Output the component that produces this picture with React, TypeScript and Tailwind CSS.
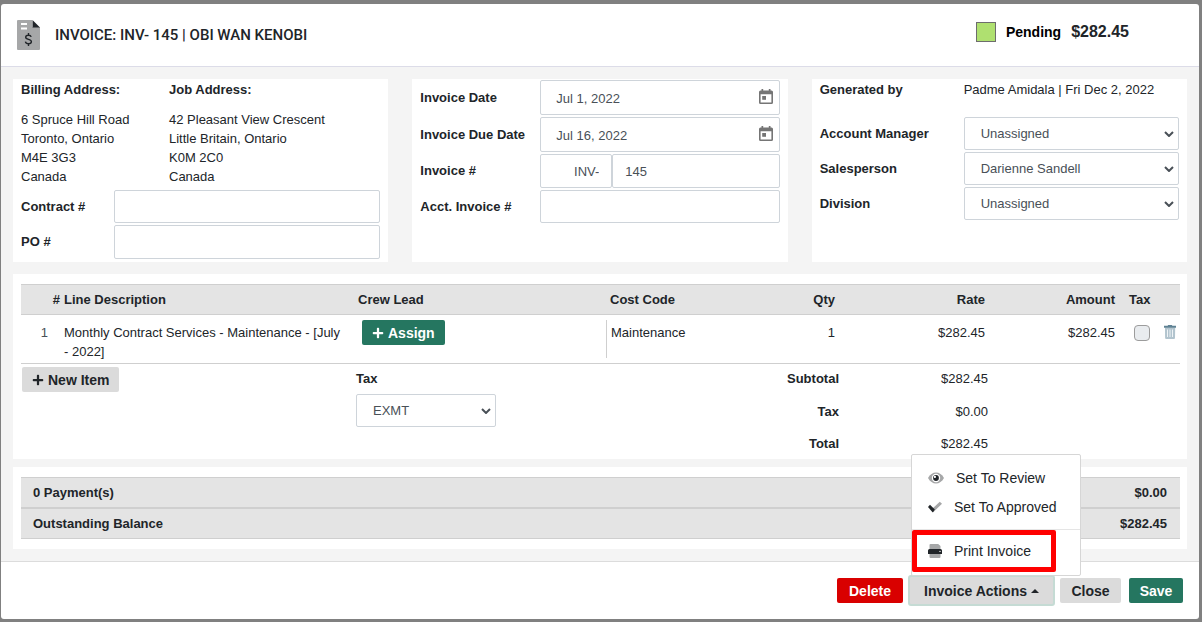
import { type ReactNode } from "react";
import { FaPlus } from "react-icons/fa";

const label = "text-[13px] leading-5 font-bold text-[#212529]";
const field = "w-full rounded-[2px] border border-[#ced4da] bg-white text-[13px] text-[#495057]";

function Chevron() {
  return (
    <svg viewBox="0 0 10 6" className="pointer-events-none absolute right-[5px] top-1/2 h-[6px] w-[10px] -translate-y-1/2" fill="none" stroke="#495057" strokeWidth="2">
      <path d="M1 1l4 4 4-4" />
    </svg>
  );
}

function Select({ id, value }: { id: string; value: string }) {
  return (
    <div className="relative w-full">
      <select id={id} defaultValue={value} className={`${field} h-[33px] appearance-none pl-4 pr-5`}>
        <option>{value}</option>
      </select>
      <Chevron />
    </div>
  );
}

function DateField({ id, value }: { id: string; value: string }) {
  return (
    <div className="relative">
      <input id={id} defaultValue={value} className={`${field} h-[35px] pl-[15px] pr-8 pt-0.5 text-[#212529]`} />
      <button type="button" aria-label="Open calendar" className="absolute right-[7px] top-[9px]">
        <svg viewBox="0 0 14 15" className="h-[15px] w-[14px]">
          <path d="M1.500 1.500H2.500V0h1.700v1.500h5.600V0h1.700v1.500h1A1.500 1.500 0 0 1 14 3v10.500a1.500 1.500 0 0 1-1.500 1.500h-11A1.500 1.500 0 0 1 0 13.500V3a1.500 1.500 0 0 1 1.500-1.500zM1.600 5.200v8.200h10.800V5.200z" fill="#757575" fillRule="evenodd" />
          <path d="M3.200 7h3.800v3.800H3.200z" fill="#757575" />
        </svg>
      </button>
    </div>
  );
}

function Panel({ children }: { children: ReactNode }) {
  return <section className="min-h-[183px] bg-white px-2">{children}</section>;
}

function Address({ title, lines }: { title: string; lines: string[] }) {
  return (
    <div>
      <h2 className={label}>{title}</h2>
      <address className="mt-2.5 text-[13px] leading-[19px] not-italic">
        {lines.map((l) => (
          <div key={l}>{l}</div>
        ))}
      </address>
    </div>
  );
}

export default function App() {
  return (
    <div className="bg-[#808080] pt-1 pr-[3px] pb-[3px] pl-px font-['Liberation_Sans',Arial,sans-serif] text-[13px] text-[#212529]">
      <main className="rounded-[3px] bg-white">
        <header className="flex h-[63px] items-center border-b border-[#dcdce8] pr-[70px] pl-4">
          <svg viewBox="0 0 23 30" className="h-[30px] w-[23px]">
            <path d="M1 0h14v7h8v22a1 1 0 0 1-1 1H1a1 1 0 0 1-1-1V1a1 1 0 0 1 1-1z" fill="#a6a7a8" />
            <path d="M15.500 0L23 7.500h-7.500z" fill="#212529" />
            <path d="M4 4h6M4 8.500h6" stroke="#fff" strokeWidth="1.800" />
            <path d="M14.200 16.900c-.3-1.100-1.300-1.700-2.800-1.700-1.700 0-2.700.8-2.700 2 0 2.900 5.700 1.400 5.700 4.400 0 1.400-1.200 2.200-2.900 2.200s-2.800-.8-3.100-2.100M11.500 13v2.200M11.500 23.800v2.200" fill="none" stroke="#212529" strokeWidth="1.400" />
          </svg>
          <h1 className="ml-[15px] font-['Roboto',sans-serif] text-[15px] font-medium">INVOICE: INV- 145 | OBI WAN KENOBI</h1>
          <div className="mb-[7px] ml-auto flex items-center gap-2.5">
            <span className="size-5 border border-[#6d6d6d] bg-[#afe070]" />
            <strong className="text-sm text-black">Pending</strong>
            <strong className="text-base">$282.45</strong>
          </div>
        </header>

        <div className="bg-[#f4f4f4] p-3">
          <div className="grid grid-cols-3 gap-6">
            <Panel>
              <div className="grid grid-cols-[148px_1fr] pt-px">
                <Address title="Billing Address:" lines={["6 Spruce Hill Road", "Toronto, Ontario", "M4E 3G3", "Canada"]} />
                <Address title="Job Address:" lines={["42 Pleasant View Crescent", "Little Britain, Ontario", "K0M 2C0", "Canada"]} />
              </div>
              <div className="mt-1 grid grid-cols-[93px_1fr] items-center gap-y-0.5">
                <label htmlFor="contract" className={label}>Contract #</label>
                <input id="contract" className={`${field} h-[33px] px-3`} />
                <label htmlFor="po" className={label}>PO #</label>
                <input id="po" className={`${field} h-[34px] px-3`} />
              </div>
            </Panel>
            <Panel>
              <div className="grid grid-cols-[120px_1fr] items-center gap-y-0.5 pt-px">
                <label htmlFor="date" className={label}>Invoice Date</label>
                <DateField id="date" value="Jul 1, 2022" />
                <label htmlFor="due" className={label}>Invoice Due Date</label>
                <DateField id="due" value="Jul 16, 2022" />
                <label htmlFor="number" className={label}>Invoice #</label>
                <div className="flex">
                  <input aria-label="Invoice prefix" defaultValue="INV-" className={`${field} h-[34px] max-w-[72px] px-3 text-right`} />
                  <input id="number" defaultValue="145" className={`${field} h-[34px] min-w-0 px-3`} />
                </div>
                <label htmlFor="acct" className={label}>Acct. Invoice #</label>
                <input id="acct" className={`${field} h-[33px] px-3`} />
              </div>
            </Panel>
            <Panel>
              <div className="grid grid-cols-[144px_1fr] items-center pt-px">
                <span className={label}>Generated by</span>
                <span className="whitespace-nowrap leading-5">Padme Amidala | Fri Dec 2, 2022</span>
              </div>
              <div className="mt-[17px] grid grid-cols-[144px_1fr] items-center gap-y-0.5">
                <label htmlFor="manager" className={label}>Account Manager</label>
                <Select id="manager" value="Unassigned" />
                <label htmlFor="sales" className={label}>Salesperson</label>
                <Select id="sales" value="Darienne Sandell" />
                <label htmlFor="division" className={label}>Division</label>
                <Select id="division" value="Unassigned" />
              </div>
            </Panel>
          </div>

          <section className="mt-3 bg-white pt-2.5 pr-[7px] pb-[5px] pl-2">
            <table className="w-full table-fixed border-collapse leading-[19px]">
              <colgroup>
                <col className="w-[43px]" />
                <col />
                <col className="w-[248px]" />
                <col className="w-[141px]" />
                <col className="w-[88px]" />
                <col className="w-[150px]" />
                <col className="w-[130px]" />
                <col className="w-[41px]" />
                <col className="w-[24px]" />
              </colgroup>
              <thead className="border-y border-[#cfcfcf] bg-[#e4e4e4]">
                <tr className="h-[30px] text-left">
                  <th className="pr-1 text-right">#</th>
                  <th>Line Description</th>
                  <th>Crew Lead</th>
                  <th className="pl-1">Cost Code</th>
                  <th className="text-right">Qty</th>
                  <th className="text-right">Rate</th>
                  <th className="text-right">Amount</th>
                  <th className="pl-3.5">Tax</th>
                  <th aria-label="Remove" />
                </tr>
              </thead>
              <tbody>
                <tr className="border-b border-[#cfcfcf] align-top">
                  <td className="pt-2 pr-4 text-right text-[#495057]">1</td>
                  <td className="pt-2 pr-3">Monthly Contract Services - Maintenance - [July - 2022]</td>
                  <td className="pt-[5px] pl-1">
                    <button type="button" className="flex h-[25px] items-center gap-1 rounded-[2px] bg-[#257660] px-2.5 text-sm font-bold text-white">
                      <FaPlus className="size-3" />Assign
                    </button>
                  </td>
                  <td className="pt-[5px] pb-[5px]">
                    <div className="h-[38px] border-l border-[#cfcfcf] pt-[3px] pl-1">Maintenance</div>
                  </td>
                  <td className="pt-2 text-right">1</td>
                  <td className="pt-2 text-right">$282.45</td>
                  <td className="pt-2 text-right">$282.45</td>
                  <td className="pt-2.5 pl-[19px]">
                    <input type="checkbox" aria-label="Taxable" className="block size-4 appearance-none rounded-[4px] border border-[#9c9c9c] bg-[#e9ecef]" />
                  </td>
                  <td className="pt-2.5 pl-2">
                    <button type="button" aria-label="Delete line" className="block">
                      <svg viewBox="0 0 12 14" className="h-[14px] w-3">
                        <path d="M1 2.500h10.200l-.2 10.400a1.100 1.100 0 0 1-1.100 1.100H2.200a1.100 1.100 0 0 1-1.100-1.100z" fill="#b2c4ce" />
                        <path d="M3.500 4.500v7.500M6 4.500v7.500M8.500 4.500v7.500" stroke="#eef3f6" strokeWidth="1" />
                        <path d="M0 .800h3.600L4.200 0h3.600l.6.800H12v1.900H0z" fill="#5f8294" />
                      </svg>
                    </button>
                  </td>
                </tr>
              </tbody>
            </table>
            <div className="flex h-[90px]">
              <div className="w-[335px] pt-[3px] pl-px">
                <button type="button" className="flex h-[25px] items-center gap-1 rounded-[2px] bg-[#dbdbdb] px-2.5 text-sm font-bold">
                  <FaPlus className="size-3" />New Item
                </button>
              </div>
              <div className="w-[140px] pt-[5px]">
                <label htmlFor="tax" className={`${label} mb-[5px] block`}>Tax</label>
                <Select id="tax" value="EXMT" />
              </div>
              <dl className="mr-48 ml-auto grid grid-cols-[1fr_149px] gap-y-[13px] pt-[5px] text-right leading-[19px]">
                <dt className="font-bold">Subtotal</dt>
                <dd>$282.45</dd>
                <dt className="font-bold">Tax</dt>
                <dd>$0.00</dd>
                <dt className="font-bold">Total</dt>
                <dd>$282.45</dd>
              </dl>
            </div>
          </section>

          <section className="mt-2 bg-white py-2.5 pr-[7px] pl-2 font-bold">
            <div className="flex h-[31px] items-center justify-between border-y border-[#cfcfcf] bg-[#e4e4e4] pr-[13px] pl-3">
              <span>0 Payment(s)</span>
              <span>$0.00</span>
            </div>
            <div className="flex h-[31px] items-center justify-between border-y border-[#cfcfcf] bg-[#e4e4e4] pr-[13px] pl-3">
              <span>Outstanding Balance</span>
              <span>$282.45</span>
            </div>
          </section>
        </div>

        <footer className="flex h-[58px] items-center justify-end gap-[5px] border-t border-[#dcdcdc] pr-4">
          <button type="button" className="h-[25px] w-[66px] rounded-[2px] bg-[#d90000] text-sm font-bold text-white">Delete</button>
          <div className="relative">
            <button type="button" aria-expanded="true" className="flex h-[31px] w-[147px] items-center justify-center gap-1 rounded-[3px] border-2 border-[#c5dbd4] bg-[#dbdbdb] text-sm font-bold">
              Invoice Actions
              <svg viewBox="0 0 8 4" className="h-1 w-2"><path d="M0 4l4-4 4 4z" fill="#212529" /></svg>
            </button>
            <div role="menu" className="absolute bottom-[30px] left-[3px] w-[170px] rounded-[2px] border border-[#d6d6d6] bg-white pt-2 pb-[3px] text-sm">
              <button type="button" role="menuitem" className="flex h-[29px] w-full items-center gap-3 pl-4">
                <svg viewBox="0 0 16 12" className="h-3 w-4">
                  <path d="M0 6C2 2.400 4.800.5 8 .5S14 2.400 16 6c-2 3.600-4.800 5.500-8 5.500S2 9.600 0 6z" fill="#a6a7a8" />
                  <circle cx="8" cy="6" r="4.200" fill="#fff" />
                  <circle cx="8" cy="6" r="2.900" fill="#212529" />
                  <circle cx="6.900" cy="4.900" r="1.100" fill="#fff" />
                </svg>
                Set To Review
              </button>
              <button type="button" role="menuitem" className="flex h-[29px] w-full items-center gap-3 pl-4">
                <svg viewBox="0 0 14 12" className="h-3 w-3.5">
                  <path d="M4 8L11.800.700 14 2.800 5.200 11.200z" fill="#a6a7a8" />
                  <path d="M2 3.800L6.800 8.600 5 11.200H4.500L0 6z" fill="#212529" />
                </svg>
                Set To Approved
              </button>
              <div className="mt-2 border-t border-[#e5e5e5]" />
              <div className="h-[42px] w-[144px] rounded-[2px] border-[5px] border-[#ff0000]">
                <button type="button" role="menuitem" className="flex h-full w-full items-center gap-3 pl-[11px]">
                  <svg viewBox="0 0 14 14" className="size-3.5">
                    <path d="M1.500 1a1 1 0 0 1 1-1h7.700l2.300 2v4h-11zM1.500 9h11v4a1 1 0 0 1-1 1h-9a1 1 0 0 1-1-1z" fill="#a6a7a8" />
                    <path d="M0 6.500A1.500 1.500 0 0 1 1.500 5h11A1.500 1.500 0 0 1 14 6.500V10H0z" fill="#212529" />
                    <circle cx="12" cy="7.400" r=".7" fill="#fff" />
                  </svg>
                  Print Invoice
                </button>
              </div>
            </div>
          </div>
          <button type="button" className="h-[25px] w-[61px] rounded-[2px] bg-[#dbdbdb] text-sm font-bold">Close</button>
          <button type="button" className="ml-[3px] h-[25px] w-[54px] rounded-[2px] bg-[#257660] text-sm font-bold text-white">Save</button>
        </footer>
      </main>
    </div>
  );
}
